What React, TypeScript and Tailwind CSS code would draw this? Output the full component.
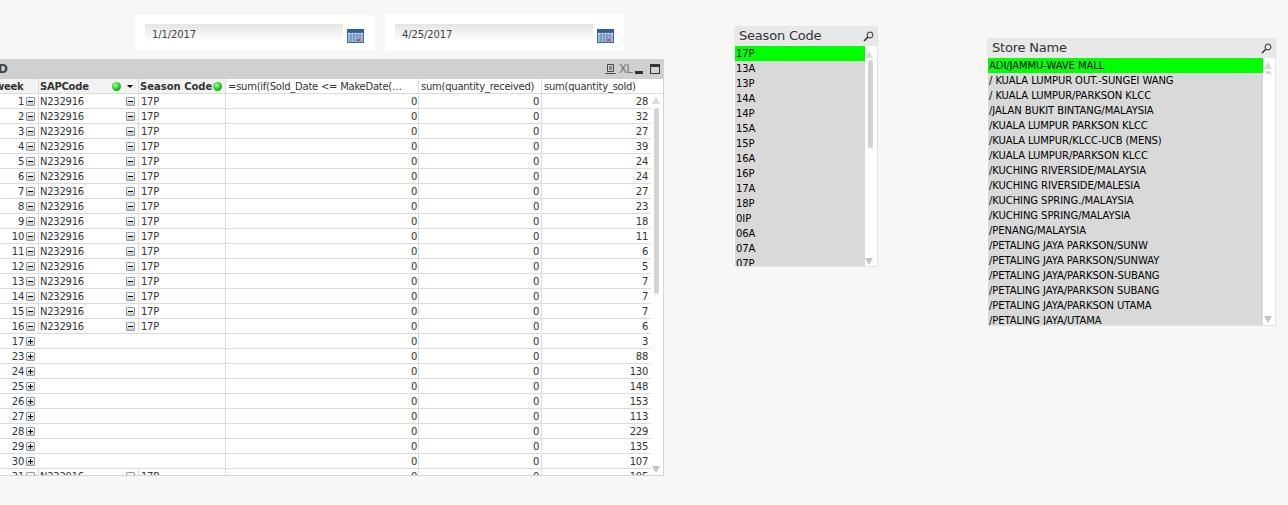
const font = "font-['DejaVu_Sans',sans-serif]";

const sold = [28, 32, 27, 39, 24, 24, 27, 23, 18, 11, 6, 5, 7, 7, 7, 6];
const summary = [
  [17, 3],
  [23, 88],
  [24, 130],
  [25, 148],
  [26, 153],
  [27, 113],
  [28, 229],
  [29, 135],
  [30, 107],
];
const seasons = ["13A", "13P", "14A", "14P", "15A", "15P", "16A", "16P", "17A", "18P", "0IP", "06A", "07A", "07P"];
const stores = [
  "/ KUALA LUMPUR OUT.-SUNGEI WANG",
  "/ KUALA LUMPUR/PARKSON KLCC",
  "/JALAN BUKIT BINTANG/MALAYSIA",
  "/KUALA LUMPUR PARKSON KLCC",
  "/KUALA LUMPUR/KLCC-UCB (MENS)",
  "/KUALA LUMPUR/PARKSON KLCC",
  "/KUCHING RIVERSIDE/MALAYSIA",
  "/KUCHING RIVERSIDE/MALESIA",
  "/KUCHING SPRING./MALAYSIA",
  "/KUCHING SPRING/MALAYSIA",
  "/PENANG/MALAYSIA",
  "/PETALING JAYA PARKSON/SUNW",
  "/PETALING JAYA PARKSON/SUNWAY",
  "/PETALING JAYA/PARKSON-SUBANG",
  "/PETALING JAYA/PARKSON SUBANG",
  "/PETALING JAYA/PARKSON UTAMA",
  "/PETALING JAYA/UTAMA",
];

const Toggle = ({ plus }: { plus?: boolean }) => (
  <span className="relative block h-[9px] w-[9px] shrink-0 rounded-[1px] border border-[#7f9db9] bg-gradient-to-b from-white to-[#cfc9b8]">
    <span className="absolute left-[1px] top-[3px] h-px w-[5px] bg-black" />
    {plus && <span className="absolute left-[3px] top-[1px] h-[5px] w-px bg-black" />}
  </span>
);

const GreenDot = () => (
  <span className="block h-[9px] w-[9px] shrink-0 rounded-full bg-[radial-gradient(circle_at_40%_35%,#a8ffa0,#16c516_55%,#0a7d0a)]" />
);

const CalendarIcon = () => (
  <svg width="17" height="14" viewBox="0 0 17 14" className="shrink-0">
    <rect width="17" height="14" fill="#3a6ea5" />
    <rect x="0" y="0" width="17" height="3" fill="#2f5f9a" />
    <path d="M1 4h15v9H1z" fill="#dfe8f3" />
    <path d="M1 6h15M1 8h15M1 10h15M1 12h15M4 4v9M7 4v9M10 4v9M13 4v9" stroke="#5c86b8" strokeWidth="1" />
    <rect x="10" y="10" width="3" height="2" fill="#e8383a" />
  </svg>
);

const SearchIcon = () => (
  <svg width="11" height="11" viewBox="0 0 11 11" fill="none" className="shrink-0">
    <circle cx="7" cy="4" r="2.8" stroke="#555" strokeWidth="1.2" />
    <path d="M5 6 1 10" stroke="#333" strokeWidth="1.6" />
  </svg>
);

const Thumb = ({ className }: { className: string }) => (
  <span className={`absolute rounded-[3px] bg-[#d3d3d3] ${className}`} />
);

const ArrowUp = ({ className }: { className: string }) => (
  <span className={`absolute h-0 w-0 border-x-[4px] border-b-[7px] border-x-transparent border-b-[#d9d9d9] ${className}`} />
);

const ArrowDown = ({ className }: { className: string }) => (
  <span className={`absolute h-0 w-0 border-x-[4px] border-t-[7px] border-x-transparent border-t-[#c4c4c4] ${className}`} />
);

const DateBox = ({ value, className }: { value: string; className: string }) => (
  <div className={`absolute flex items-center bg-white pl-[10px] ${className}`}>
    <div className="flex h-[17px] w-[198px] items-center bg-gradient-to-b from-[#e4e4e4] to-white pl-[7px] pt-[3px] text-[10px] tracking-[-0.1px] text-[#444]">
      {value}
    </div>
    <div className="ml-[4px] mt-[6px]">
      <CalendarIcon />
    </div>
  </div>
);

const DetailRow = ({ week, value }: { week: number; value: number }) => (
  <div className="flex h-[15px] border-b border-[#dcdcdc] pt-[1px] leading-[14px]">
    <div className="-mt-[1px] flex w-[59px] items-center justify-end gap-[2px] border-r border-[#dcdcdc] pr-[3px] pt-[1px]">
      {week}
      <Toggle />
    </div>
    <div className="-mt-[1px] flex w-[100px] items-center justify-between border-r border-[#dcdcdc] pl-[1px] pr-[3px] pt-[1px]">
      N232916
      <Toggle />
    </div>
    <div className="-mt-[1px] w-[87px] border-r border-[#dcdcdc] pl-[2px] pt-[1px]">17P</div>
    <div className="-mt-[1px] w-[193px] border-r border-[#dcdcdc] pr-[1px] pt-[1px] text-right">0</div>
    <div className="-mt-[1px] w-[123px] border-r border-[#dcdcdc] pr-[2px] pt-[1px] text-right">0</div>
    <div className="w-[109px] pr-[3px] text-right">{value}</div>
  </div>
);

const SummaryRow = ({ week, value }: { week: number; value: number }) => (
  <div className="flex h-[15px] border-b border-[#dcdcdc] pt-[1px] leading-[14px]">
    <div className="-mt-[1px] flex w-[246px] items-center border-r border-[#dcdcdc] pl-[23px] pt-[1px]">
      <span className="w-[21px] text-right">{week}</span>
      <span className="ml-[2px]">
        <Toggle plus />
      </span>
    </div>
    <div className="-mt-[1px] w-[193px] border-r border-[#dcdcdc] pr-[1px] pt-[1px] text-right">0</div>
    <div className="-mt-[1px] w-[123px] border-r border-[#dcdcdc] pr-[2px] pt-[1px] text-right">0</div>
    <div className="w-[109px] pr-[3px] text-right">{value}</div>
  </div>
);

const ListRow = ({ label, selected }: { label: string; selected?: boolean }) => (
  <div className={`h-[15px] whitespace-nowrap pl-[1px] pt-[1px] leading-[14px] tracking-[-0.08px] ${selected ? "bg-[#00ff00]" : ""}`}>{label}</div>
);

export default function App() {
  return (
    <div className={`relative h-[505px] w-[1288px] overflow-hidden bg-[#f7f7f7] text-[10px] ${font}`}>
      <DateBox value="1/1/2017" className="left-[135px] top-[15px] h-[35px] w-[239px]" />
      <DateBox value="4/25/2017" className="left-[385px] top-[14px] h-[37px] w-[239px]" />

      {/* Straight table */}
      <div className="absolute left-[-20px] top-[59px] h-[417px] w-[684px] overflow-hidden border-b border-r border-[#d4d4d4] bg-white tracking-[-0.25px] text-[#333]">
        <div className="flex h-[20px] items-center justify-between bg-[#d0d0d0] pl-[18px] pr-[3px]">
          <span className="text-[12px] font-bold text-[#444]">D</span>
          <div className="flex items-center">
            <svg width="11" height="11" viewBox="0 0 11 11" fill="none" stroke="#444" className="mr-[3px]">
              <path d="M2.5.5h6v7h-6zM.5 9.5h10M4 3h3M4 5h3" />
            </svg>
            <span className="mr-[4px] w-[12px] text-[12px] leading-none tracking-[-1px] text-[#777]">XL</span>
            <span className="mr-[7px] mt-[7px] h-[3px] w-[8px] bg-[#333]" />
            <span className="h-[10px] w-[10px] border border-t-[3px] border-[#333]" />
          </div>
        </div>

        <div className="relative">
          <div className="flex h-[15px] border-b border-[#dcdcdc] bg-white leading-[15px]">
            <div className="w-[59px] border-r border-[#dcdcdc] bg-[#f3f3f3] pl-[15px] font-bold">week</div>
            <div className="flex w-[100px] items-center border-r border-[#dcdcdc] bg-[#f3f3f3] pl-[1px] pr-[5px] font-bold">
              <span className="flex-1">SAPCode</span>
              <GreenDot />
              <span className="ml-[6px] h-0 w-0 border-x-[3px] border-t-[3px] border-x-transparent border-t-black" />
            </div>
            <div className="flex w-[87px] items-center justify-between border-r border-[#dcdcdc] bg-[#f3f3f3] pl-[1px] pr-[3px] font-bold">
              <span className="whitespace-nowrap tracking-normal">Season Code</span>
              <GreenDot />
            </div>
            <div className="w-[193px] truncate border-r border-[#dcdcdc] pl-[2px]">=sum(if(Sold_Date &lt;= MakeDate(…</div>
            <div className="w-[123px] border-r border-[#dcdcdc] pl-[2px]">sum(quantity_received)</div>
            <div className="w-[109px] pl-[2px]">sum(quantity_sold)</div>
          </div>

          <div className="w-[671px]">
            {sold.map((value, i) => (
              <DetailRow key={i} week={i + 1} value={value} />
            ))}
            {summary.map(([week, value]) => (
              <SummaryRow key={week} week={week} value={value} />
            ))}
            <DetailRow week={31} value={105} />
          </div>

          <ArrowUp className="right-[3px] top-[18px]" />
          <Thumb className="right-[4px] top-[29px] h-[186px] w-[5px]" />
          <ArrowDown className="right-[3px] top-[387px]" />
        </div>
      </div>

      {/* Season Code list box */}
      <div className="absolute left-[734px] top-[26px] h-[241px] w-[144px] overflow-hidden rounded-t-[2px] border-b border-r border-[#e2e2e2] bg-white text-black">
        <div className="flex h-[20px] items-center justify-between bg-[#e8e8e8] pl-[5px] pr-[3px]">
          <span className="text-[13px] tracking-[-0.2px] text-[#333]">Season Code</span>
          <SearchIcon />
        </div>
        <div className="relative">
          <div className="ml-px h-[220px] w-[130px] overflow-hidden bg-[#d9d9d9]">
            <ListRow label="17P" selected />
            {seasons.map((s) => (
              <ListRow key={s} label={s} />
            ))}
          </div>
          <ArrowUp className="right-[4px] top-[5px]" />
          <Thumb className="right-[4px] top-[14px] h-[88px] w-[5px]" />
          <ArrowDown className="right-[4px] top-[212px]" />
        </div>
      </div>

      {/* Store Name list box */}
      <div className="absolute left-[987px] top-[38px] h-[288px] w-[289px] overflow-hidden rounded-t-[2px] border-b border-r border-[#e2e2e2] bg-white text-black">
        <div className="flex h-[20px] items-center justify-between bg-[#e8e8e8] pl-[5px] pr-[3px]">
          <span className="text-[13px] tracking-[-0.2px] text-[#333]">Store Name</span>
          <SearchIcon />
        </div>
        <div className="relative">
          <div className="ml-px h-[267px] w-[275px] overflow-hidden bg-[#d9d9d9]">
            <ListRow label="ADI/JAMMU-WAVE MALL" selected />
            {stores.map((s) => (
              <ListRow key={s} label={s} />
            ))}
          </div>
          <ArrowUp className="right-[3px] top-[4px]" />
          <Thumb className="right-[4px] top-[13px] h-[3px] w-[5px]" />
          <ArrowDown className="right-[3px] top-[258px]" />
        </div>
      </div>
    </div>
  );
}
